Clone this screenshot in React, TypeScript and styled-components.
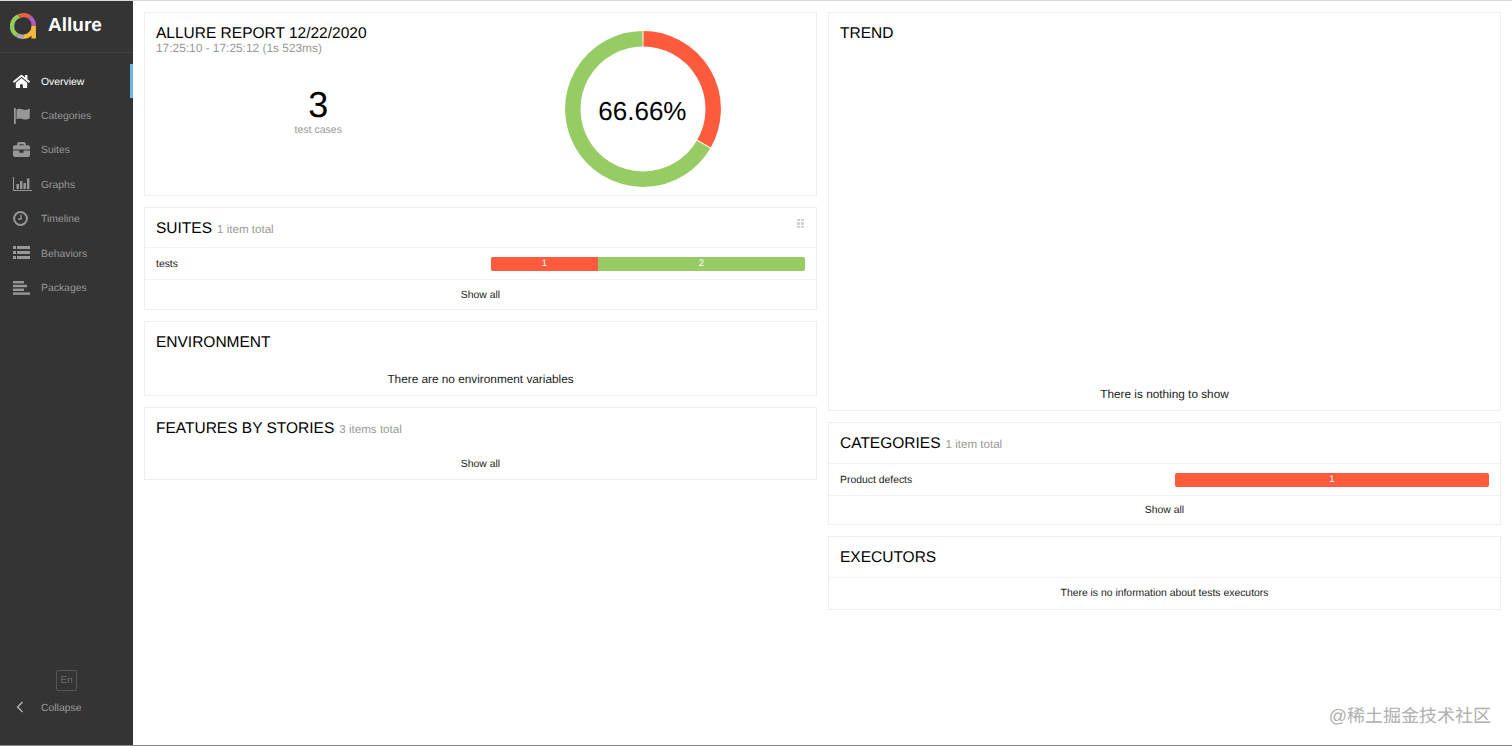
import React from "react";
import styled, { createGlobalStyle } from "styled-components";
import { FaHome, FaBriefcase } from "react-icons/fa";

const Global = createGlobalStyle`
  html, body { margin: 0; padding: 0; height: 100%; background: #fff; }
  body { font-family: "Liberation Sans", Arial, sans-serif; color: #000; overflow: hidden; text-rendering: geometricPrecision; }
  * { box-sizing: border-box; }
`;

const Page = styled.div`
  position: relative;
  display: flex;
  width: 1512px;
  height: 746px;
  border-top: 1px solid #d9d9d9;
  border-bottom: 1px solid #8a8a8a;
`;

const Sidebar = styled.aside`
  display: flex;
  flex-direction: column;
  width: 133px;
  flex: none;
  background: #343434;
`;

const Brand = styled.div`
  display: flex;
  align-items: center;
  gap: 11px;
  height: 52px;
  padding: 0 0 0 10px;
  border-bottom: 1px solid #3f3f3f;
`;

const BrandName = styled.span`
  color: #fff;
  font-size: 19px;
  font-weight: 700;
  margin-top: -1px;
`;

const Menu = styled.nav`
  display: flex;
  flex-direction: column;
  padding-top: 11px;
  flex: 1;
`;

const MenuItem = styled.a<{ $active?: boolean }>`
  display: flex;
  align-items: center;
  height: 34.4px;
  padding-left: 13px;
  font-size: 10.4px;
  color: ${(p) => (p.$active ? "#fff" : "#979797")};
  border-right: 3px solid ${(p) => (p.$active ? "#6cb6e9" : "transparent")};
`;

const IconSlot = styled.span`
  display: flex;
  align-items: center;
  width: 28px;
  height: 18px;
  flex: none;
`;

const SideLabel = styled.span`
  margin-top: 2px;
`;

const SideFooter = styled.div`
  display: flex;
  flex-direction: column;
  padding-bottom: 30px;
`;

const LangBox = styled.div`
  align-self: flex-start;
  margin-left: 56px;
  width: 21px;
  height: 21px;
  border: 1px solid #555;
  border-radius: 2px;
  color: #6c6c6c;
  font-size: 10px;
  line-height: 19px;
  text-align: center;
`;

const Collapse = styled.div`
  display: flex;
  align-items: center;
  margin-top: 8px;
  height: 16px;
  padding-left: 16px;
  gap: 17px;
  color: #9a9a9a;
  font-size: 10.4px;
`;

const Main = styled.main`
  flex: 1;
  display: grid;
  grid-template-columns: 673px 673px;
  column-gap: 11px;
  align-items: start;
  padding: 11px 11px 0;
`;

const Column = styled.div`
  display: flex;
  flex-direction: column;
  gap: 11px;
`;

const Card = styled.section<{ $height?: number }>`
  position: relative;
  border: 1px solid #eee;
  height: ${(p) => (p.$height ? `${p.$height}px` : "auto")};
  display: flex;
  flex-direction: column;
`;

const SummaryBody = styled.div`
  display: grid;
  grid-template-columns: 1fr 1fr;
  height: 100%;
  padding: 0 11px;
`;

const SummaryLeft = styled.div`
  display: flex;
  flex-direction: column;
  padding-top: 12px;
`;

const Title = styled.h2`
  margin: 0;
  font-size: 15.5px;
  line-height: 18px;
  font-weight: 400;
  color: #000;
`;

const Sub = styled.div`
  margin-top: -1px;
  font-size: 11.9px;
  line-height: 13px;
  color: #999;
`;

const Stat = styled.div`
  display: flex;
  flex-direction: column;
  align-items: center;
  margin-top: 32px;
`;

const StatValue = styled.div`
  font-size: 36px;
  line-height: 36px;
`;

const StatLabel = styled.div`
  font-size: 10.5px;
  line-height: 14px;
  color: #999;
`;

const ChartWrap = styled.div`
  display: flex;
  justify-content: center;
  padding-top: 18px;
`;

const CardHead = styled.header<{ $tall?: boolean }>`
  display: flex;
  align-items: baseline;
  gap: 5px;
  padding: 12px 11px 0;
  height: ${(p) => (p.$tall ? 40 : 39)}px;
`;

const Count = styled.span`
  font-size: 11.6px;
  color: #999;
`;

const Row = styled.div`
  display: flex;
  align-items: center;
  height: 32px;
  padding: 0 11px;
  border-top: 1px solid #f3f3f3;
  font-size: 10.4px;
  color: #222;
`;

const NoteRow = styled.div`
  height: 32px;
  padding-top: 10px;
  border-top: 1px solid #f3f3f3;
  font-size: 10.4px;
  line-height: 12px;
  text-align: center;
  color: #222;
`;

const RowName = styled.div`
  width: 335px;
  flex: none;
  margin-top: 2px;
`;

const Bar = styled.div`
  flex: 1;
  display: flex;
  height: 14px;
  border-radius: 2px;
  overflow: hidden;
`;

const Segment = styled.div<{ $color: string; $share: number }>`
  width: ${(p) => p.$share}%;
  background: ${(p) => p.$color};
  color: #fff;
  font-size: 9.5px;
  line-height: 14px;
  text-align: center;
`;

const ShowAll = styled.div<{ $plain?: boolean; $short?: boolean }>`
  height: ${(p) => (p.$short ? 29 : 30)}px;
  border-top: 1px solid ${(p) => (p.$plain ? "transparent" : "#f3f3f3")};
  margin-top: ${(p) => (p.$plain ? 1 : 0)}px;
  font-size: 10.4px;
  line-height: ${(p) => (p.$short ? 29 : 31)}px;
  text-align: center;
  color: #222;
`;

const Note = styled.div`
  margin-top: 11px;
  text-align: center;
  font-size: 11.8px;
  color: #222;
`;

const BottomNote = styled.div`
  margin-top: auto;
  padding-bottom: 9px;
  text-align: center;
  font-size: 11.8px;
  color: #222;
`;

const Grip = styled.span`
  position: absolute;
  top: 11px;
  right: 12px;
  display: grid;
  grid-template-columns: 3px 3px;
  gap: 1px;
  & > i {
    width: 3px;
    height: 2.4px;
    background: #d2d2d2;
  }
`;

const Watermark = styled.div`
  position: absolute;
  right: 21px;
  bottom: 17px;
  font-family: "Liberation Sans", "Noto Sans CJK SC", sans-serif;
  font-size: 18px;
  line-height: 24px;
  color: #b0b0b0;
`;

const Logo = () => (
  <svg width="27" height="27" viewBox="0 0 27 27">
    <g fill="none" strokeWidth="4.4">
      <path d="M7.2 22.2 A10.5 10.5 0 0 1 9 3.3" stroke="#91cc61" />
      <path d="M9 3.3 A10.5 10.5 0 0 1 19.5 4" stroke="#e8603c" />
      <path d="M19.5 4 A10.5 10.5 0 0 1 23.7 13" stroke="#b05ebd" />
      <path d="M23.7 13 L23.7 25" stroke="#f5b93b" />
      <path d="M23.7 14 A10.5 10.5 0 0 1 14 23.7" stroke="#f5b93b" />
      <path d="M14 23.7 A10.5 10.5 0 0 1 7.2 22.2" stroke="#aaa" />
    </g>
    <path d="M21 25.5 H26 V20 Z" fill="#f5b93b" />
  </svg>
);

const FlagIcon = () => (
  <svg width="18" height="16" viewBox="0 0 18 16" fill="currentColor">
    <rect x="1" y="0" width="1.8" height="16" />
    <path d="M3.5 1.5 C6 0.2 8 1 10 1.6 C12.5 2.3 14.5 1.6 16.8 0.6 V10.2 C14.5 11.4 12.5 12 10 11.2 C8 10.6 6 9.9 3.5 11.2 Z" />
  </svg>
);

const GraphIcon = () => (
  <svg width="19" height="14" viewBox="0 0 19 14" fill="currentColor">
    <rect x="0" y="0" width="1" height="14" />
    <rect x="0" y="13" width="19" height="1" />
    <rect x="3.5" y="7" width="2.4" height="5" />
    <rect x="7" y="4" width="2.4" height="8" />
    <rect x="10.5" y="6" width="2.4" height="6" />
    <rect x="14" y="1.5" width="2.4" height="10.5" />
  </svg>
);

const ClockIcon = () => (
  <svg width="15" height="15" viewBox="0 0 15 15" fill="none" stroke="currentColor">
    <circle cx="7.5" cy="7.5" r="6.4" strokeWidth="2" />
    <path d="M8 3.7 V8 H5" strokeWidth="1.4" />
  </svg>
);

const ListIcon = () => (
  <svg width="17" height="14" viewBox="0 0 17 14" fill="currentColor">
    <rect x="0" y="0" width="3" height="3" />
    <rect x="4" y="0" width="13" height="3" />
    <rect x="0" y="5" width="3" height="3" />
    <rect x="4" y="5" width="13" height="3" />
    <rect x="0" y="10" width="3" height="3" />
    <rect x="4" y="10" width="13" height="3" />
  </svg>
);

const PackagesIcon = () => (
  <svg width="17" height="14" viewBox="0 0 17 14" fill="currentColor">
    <rect x="0" y="0" width="11" height="2.4" />
    <rect x="0" y="3.8" width="14" height="2.4" />
    <rect x="0" y="7.6" width="11" height="2.4" />
    <rect x="0" y="11.4" width="17" height="2.4" />
  </svg>
);

const ChevronLeft = () => (
  <svg width="8" height="12" viewBox="0 0 8 12" fill="none" stroke="#b5b5b5" strokeWidth="1.4">
    <path d="M6.5 1 L1.6 6 L6.5 11" />
  </svg>
);

const Donut = () => {
  const r = 70.2;
  const c = 78;
  const pt = (deg: number) => {
    const a = ((deg - 90) * Math.PI) / 180;
    return `${(c + r * Math.cos(a)).toFixed(2)} ${(c + r * Math.sin(a)).toFixed(2)}`;
  };
  return (
    <svg width="156" height="156" viewBox="0 0 156 156">
      <g fill="none" strokeWidth="15.4">
        <path d={`M${pt(0.4)} A${r} ${r} 0 0 1 ${pt(119.6)}`} stroke="#fd5a3e" />
        <path d={`M${pt(120.4)} A${r} ${r} 0 1 1 ${pt(359.6)}`} stroke="#97cc64" />
      </g>
      <text x="77.4" y="89" textAnchor="middle" fontSize="26" fontFamily="'Liberation Sans', sans-serif" fill="#000">
        66.66%
      </text>
    </svg>
  );
};

const items: { label: string; icon: React.ReactNode; active?: boolean }[] = [
  { label: "Overview", icon: <FaHome size={17} />, active: true },
  { label: "Categories", icon: <FlagIcon /> },
  { label: "Suites", icon: <FaBriefcase size={17} /> },
  { label: "Graphs", icon: <GraphIcon /> },
  { label: "Timeline", icon: <ClockIcon /> },
  { label: "Behaviors", icon: <ListIcon /> },
  { label: "Packages", icon: <PackagesIcon /> },
];

export default function App() {
  return (
    <Page>
      <Global />
      <Sidebar>
        <Brand>
          <Logo />
          <BrandName>Allure</BrandName>
        </Brand>
        <Menu>
          {items.map((it) => (
            <MenuItem key={it.label} $active={it.active}>
              <IconSlot>{it.icon}</IconSlot>
              <SideLabel>{it.label}</SideLabel>
            </MenuItem>
          ))}
        </Menu>
        <SideFooter>
          <LangBox>En</LangBox>
          <Collapse>
            <ChevronLeft />
            <SideLabel>Collapse</SideLabel>
          </Collapse>
        </SideFooter>
      </Sidebar>
      <Main>
        <Column>
          <Card $height={184}>
            <SummaryBody>
              <SummaryLeft>
                <Title>ALLURE REPORT 12/22/2020</Title>
                <Sub>17:25:10 - 17:25:12 (1s 523ms)</Sub>
                <Stat>
                  <StatValue>3</StatValue>
                  <StatLabel>test cases</StatLabel>
                </Stat>
              </SummaryLeft>
              <ChartWrap>
                <Donut />
              </ChartWrap>
            </SummaryBody>
          </Card>
          <Card>
            <Grip>
              <i /><i /><i /><i /><i /><i />
            </Grip>
            <CardHead>
              <Title>SUITES</Title>
              <Count>1 item total</Count>
            </CardHead>
            <Row>
              <RowName>tests</RowName>
              <Bar>
                <Segment $color="#fd5a3e" $share={34}>1</Segment>
                <Segment $color="#97cc64" $share={66}>2</Segment>
              </Bar>
            </Row>
            <ShowAll>Show all</ShowAll>
          </Card>
          <Card $height={75}>
            <CardHead>
              <Title>ENVIRONMENT</Title>
            </CardHead>
            <Note>There are no environment variables</Note>
          </Card>
          <Card $height={73}>
            <CardHead>
              <Title>FEATURES BY STORIES</Title>
              <Count>3 items total</Count>
            </CardHead>
            <ShowAll $plain>Show all</ShowAll>
          </Card>
        </Column>
        <Column>
          <Card $height={399}>
            <CardHead>
              <Title>TREND</Title>
            </CardHead>
            <BottomNote>There is nothing to show</BottomNote>
          </Card>
          <Card>
            <CardHead $tall>
              <Title>CATEGORIES</Title>
              <Count>1 item total</Count>
            </CardHead>
            <Row>
              <RowName>Product defects</RowName>
              <Bar>
                <Segment $color="#fd5a3e" $share={100}>1</Segment>
              </Bar>
            </Row>
            <ShowAll $short>Show all</ShowAll>
          </Card>
          <Card>
            <CardHead $tall>
              <Title>EXECUTORS</Title>
            </CardHead>
            <NoteRow>There is no information about tests executors</NoteRow>
          </Card>
        </Column>
      </Main>
      <Watermark>@稀土掘金技术社区</Watermark>
    </Page>
  );
}
